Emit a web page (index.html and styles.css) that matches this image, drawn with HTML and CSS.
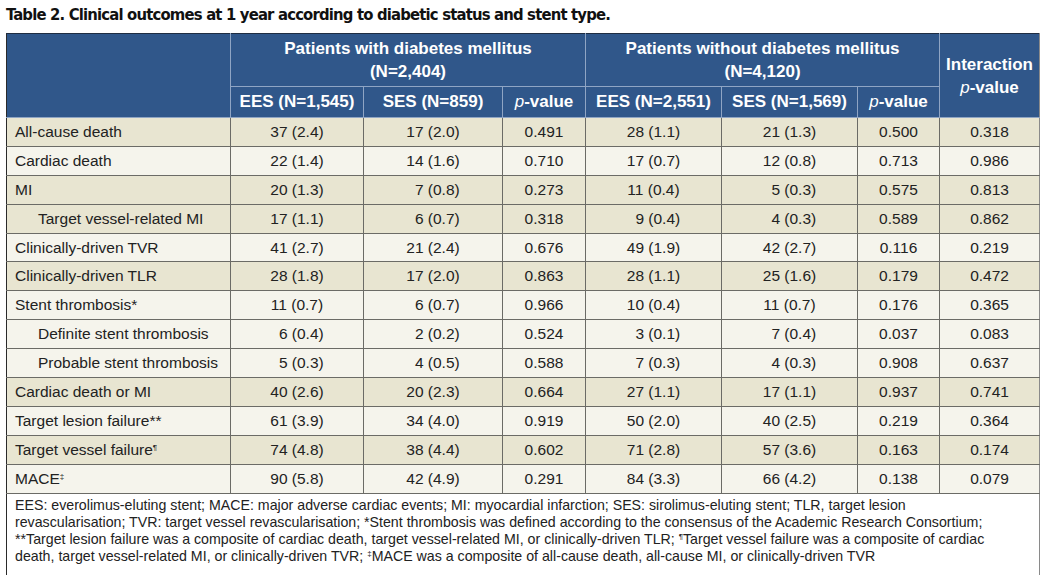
FILE: index.html
```html
<!DOCTYPE html>
<html lang="en">
<head>
<meta charset="utf-8">
<title>Table 2</title>
<link rel="stylesheet" href="styles.css">
</head>
<body>
<div class="page">
  <h1 class="caption">Table 2. Clinical outcomes at 1 year according to diabetic status and stent type.</h1>
  <table class="outcomes">
    <colgroup>
      <col class="c-label">
      <col class="c-ees1">
      <col class="c-ses1">
      <col class="c-p1">
      <col class="c-ees2">
      <col class="c-ses2">
      <col class="c-p2">
      <col class="c-int">
    </colgroup>
    <thead>
      <tr class="h1">
        <th rowspan="2"></th>
        <th colspan="3">Patients with diabetes mellitus<br>(N=2,404)</th>
        <th colspan="3">Patients without diabetes mellitus<br>(N=4,120)</th>
        <th rowspan="2" class="int">Interaction<br><i>p</i>-value</th>
      </tr>
      <tr class="h2">
        <th>EES (N=1,545)</th>
        <th>SES (N=859)</th>
        <th><i>p</i>-value</th>
        <th>EES (N=2,551)</th>
        <th>SES (N=1,569)</th>
        <th><i>p</i>-value</th>
      </tr>
    </thead>
    <tbody>
      <tr class="dark"><td>All-cause death</td><td>37 (2.4)</td><td>17 (2.0)</td><td>0.491</td><td>28 (1.1)</td><td>21 (1.3)</td><td>0.500</td><td>0.318</td></tr>
      <tr class="light"><td>Cardiac death</td><td>22 (1.4)</td><td>14 (1.6)</td><td>0.710</td><td>17 (0.7)</td><td>12 (0.8)</td><td>0.713</td><td>0.986</td></tr>
      <tr class="dark"><td>MI</td><td>20 (1.3)</td><td>&#8199;7 (0.8)</td><td>0.273</td><td>11 (0.4)</td><td>&#8199;5 (0.3)</td><td>0.575</td><td>0.813</td></tr>
      <tr class="dark"><td class="sub">Target vessel-related MI</td><td>17 (1.1)</td><td>&#8199;6 (0.7)</td><td>0.318</td><td>&#8199;9 (0.4)</td><td>&#8199;4 (0.3)</td><td>0.589</td><td>0.862</td></tr>
      <tr class="light"><td>Clinically-driven TVR</td><td>41 (2.7)</td><td>21 (2.4)</td><td>0.676</td><td>49 (1.9)</td><td>42 (2.7)</td><td>0.116</td><td>0.219</td></tr>
      <tr class="dark"><td>Clinically-driven TLR</td><td>28 (1.8)</td><td>17 (2.0)</td><td>0.863</td><td>28 (1.1)</td><td>25 (1.6)</td><td>0.179</td><td>0.472</td></tr>
      <tr class="light"><td>Stent thrombosis*</td><td>11 (0.7)</td><td>&#8199;6 (0.7)</td><td>0.966</td><td>10 (0.4)</td><td>11 (0.7)</td><td>0.176</td><td>0.365</td></tr>
      <tr class="light"><td class="sub">Definite stent thrombosis</td><td>&#8199;6 (0.4)</td><td>&#8199;2 (0.2)</td><td>0.524</td><td>&#8199;3 (0.1)</td><td>&#8199;7 (0.4)</td><td>0.037</td><td>0.083</td></tr>
      <tr class="light"><td class="sub">Probable stent thrombosis</td><td>&#8199;5 (0.3)</td><td>&#8199;4 (0.5)</td><td>0.588</td><td>&#8199;7 (0.3)</td><td>&#8199;4 (0.3)</td><td>0.908</td><td>0.637</td></tr>
      <tr class="dark"><td>Cardiac death or MI</td><td>40 (2.6)</td><td>20 (2.3)</td><td>0.664</td><td>27 (1.1)</td><td>17 (1.1)</td><td>0.937</td><td>0.741</td></tr>
      <tr class="light"><td>Target lesion failure**</td><td>61 (3.9)</td><td>34 (4.0)</td><td>0.919</td><td>50 (2.0)</td><td>40 (2.5)</td><td>0.219</td><td>0.364</td></tr>
      <tr class="dark"><td>Target vessel failure<sup>¶</sup></td><td>74 (4.8)</td><td>38 (4.4)</td><td>0.602</td><td>71 (2.8)</td><td>57 (3.6)</td><td>0.163</td><td>0.174</td></tr>
      <tr class="light"><td>MACE<sup>‡</sup></td><td>90 (5.8)</td><td>42 (4.9)</td><td>0.291</td><td>84 (3.3)</td><td>66 (4.2)</td><td>0.138</td><td>0.079</td></tr>
    </tbody>
    <tfoot>
      <tr>
        <td colspan="8" class="notes">EES: everolimus-eluting stent; MACE: major adverse cardiac events; MI: myocardial infarction; SES: sirolimus-eluting stent; TLR, target lesion<br>revascularisation; TVR: target vessel revascularisation; *Stent thrombosis was defined according to the consensus of the Academic Research Consortium;<br>**Target lesion failure was a composite of cardiac death, target vessel-related MI, or clinically-driven TLR; <sup>¶</sup>Target vessel failure was a composite of cardiac<br>death, target vessel-related MI, or clinically-driven TVR; <sup>‡</sup>MACE was a composite of all-cause death, all-cause MI, or clinically-driven TVR</td>
      </tr>
    </tfoot>
  </table>
</div>
</body>
</html>
```

FILE: styles.css
```css
html, body {
  margin: 0;
  padding: 0;
  background: #ffffff;
}

.page {
  padding: 4px 0 0 6px;
  font-family: "Liberation Sans", Arial, sans-serif;
  color: #1e1e1e;
}

.caption {
  margin: 0 0 8px 0;
  font-family: "DejaVu Sans Condensed", "Liberation Sans Narrow", sans-serif;
  font-weight: bold;
  font-size: 16.5px;
  letter-spacing: -0.82px;
  line-height: 21px;
  color: #111;
  white-space: nowrap;
}

.outcomes {
  border-collapse: collapse;
  table-layout: fixed;
  width: 1033px;
}

.c-label { width: 224px; }
.c-ees1 { width: 133px; }
.c-ses1 { width: 139px; }
.c-p1 { width: 83px; }
.c-ees2 { width: 136px; }
.c-ses2 { width: 136px; }
.c-p2 { width: 82px; }
.c-int { width: 100px; }

.outcomes thead th {
  background: #30578a;
  color: #ffffff;
  font-weight: bold;
  font-size: 17px;
  text-align: center;
  padding: 0 2px;
  border: 1px solid #8fa5c4;
  white-space: nowrap;
}

.outcomes thead tr.h1 th {
  border-top: 1px solid #1f2d42;
  height: 52px;
  line-height: 23px;
}

.outcomes thead tr.h1 th:first-child {
  border-left: 1px solid #2a2a2a;
}

.outcomes thead tr.h1 th.int {
  border-right: 1px solid #8a8a8a;
}

.outcomes thead tr.h2 th {
  height: 30px;
  line-height: 20px;
}

.outcomes thead i {
  font-weight: normal;
  font-style: italic;
}

.outcomes tbody td {
  font-size: 15.5px;
  height: 27.9px;
  padding: 0 4px;
  text-align: center;
  border: 1px solid #6b6b66;
  white-space: nowrap;
  color: #222;
}

.outcomes tbody td:first-child {
  text-align: left;
  padding-left: 8px;
  border-left: 1px solid #2a2a2a;
}

.outcomes tbody td:last-child {
  border-right: 1px solid #8a8a8a;
}

.outcomes tbody td.sub {
  padding-left: 31px;
}

.outcomes tbody tr.dark td {
  background: #e8e5d1;
}

.outcomes tbody tr.light td {
  background: #f5f4ec;
}

.outcomes sup {
  font-size: 8px;
  vertical-align: 5px;
  line-height: 0;
}

.outcomes tfoot td.notes {
  border: 1px solid #6b6b66;
  border-left: 1px solid #2a2a2a;
  border-right: 1px solid #8a8a8a;
  background: #ffffff;
  font-size: 14.2px;
  line-height: 17px;
  padding: 3px 4px 10px 8px;
  color: #222;
  white-space: nowrap;
}
```
